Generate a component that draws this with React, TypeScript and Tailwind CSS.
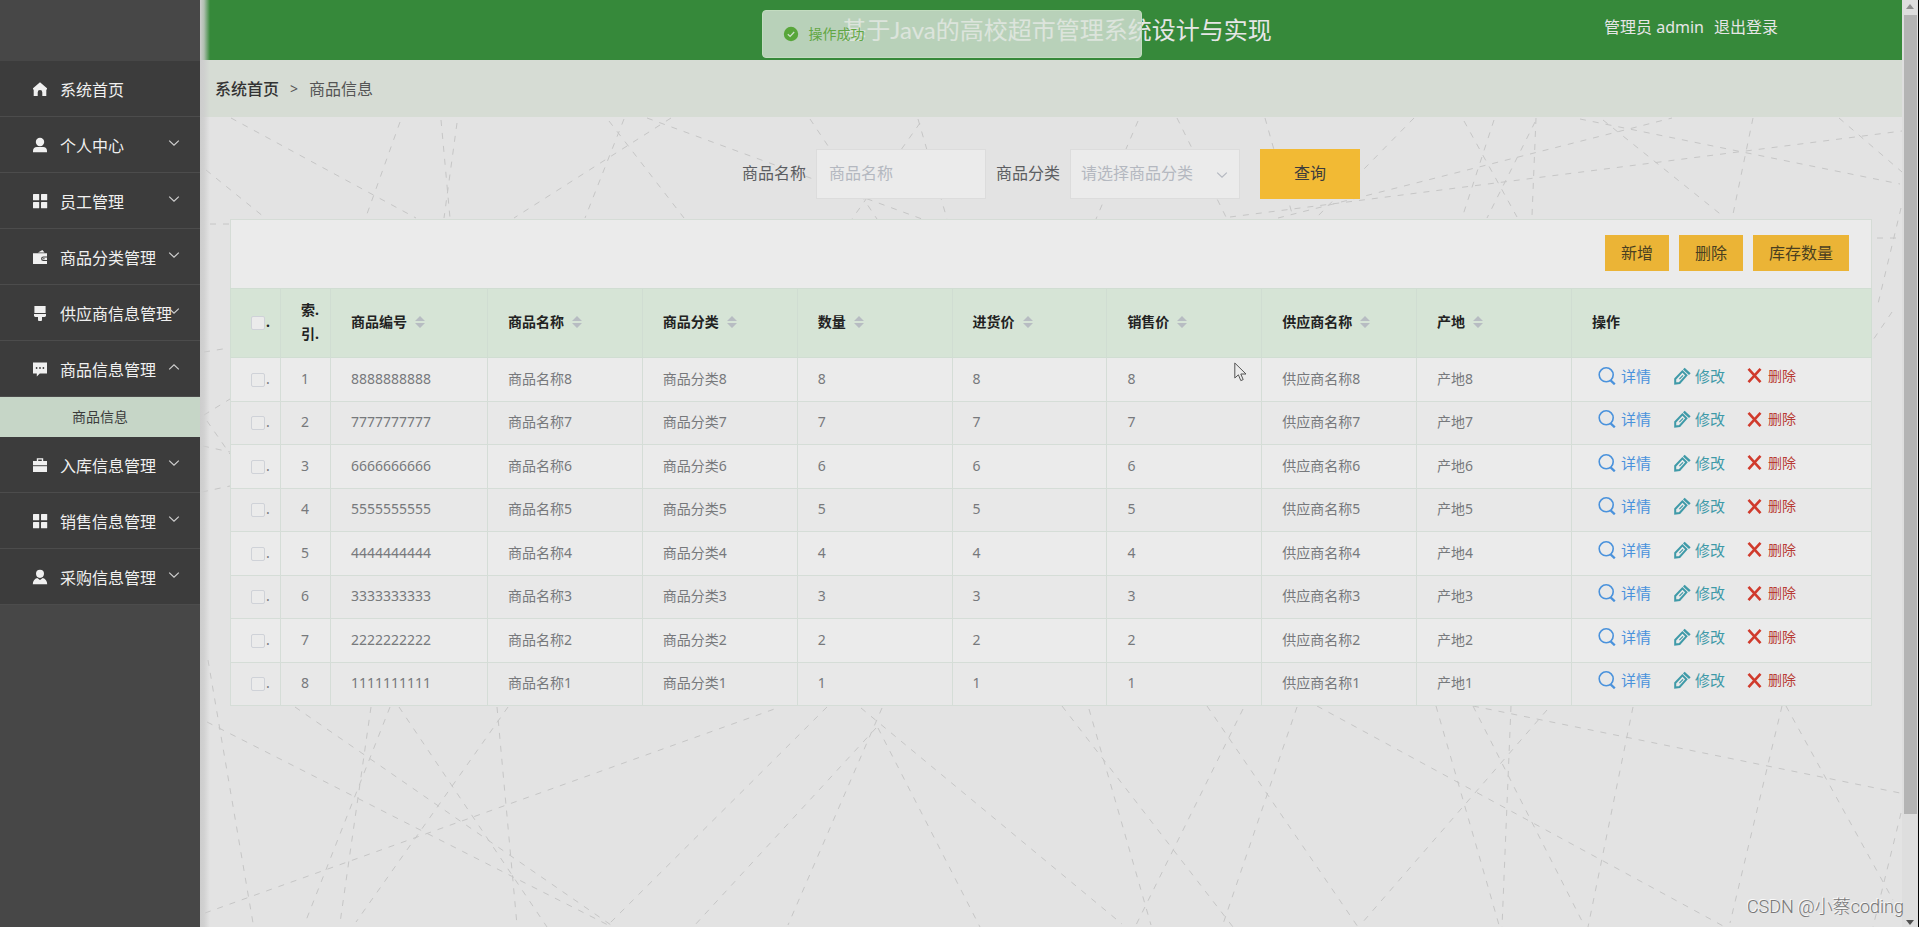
import React from 'react';

type IconProps = { className?: string };

const HomeIcon: React.FC<IconProps> = ({ className }) => (
    <svg viewBox="0 0 16 16" className={className} fill="currentColor" aria-hidden="true">
        <path d="M8 1.2 15 7.2V8.6H14.3V15H10.3V11.4A2.3 2.3 0 0 0 5.7 11.4V15H1.7V8.6H1V7.2Z" />
    </svg>
);

const UserIcon: React.FC<IconProps> = ({ className }) => (
    <svg viewBox="0 0 16 16" className={className} fill="currentColor" aria-hidden="true">
        <circle cx="8" cy="5" r="4.2" />
        <path d="M1 15.2V13.6C1 11.4 2.6 9.9 4.8 9.9H11.2C13.4 9.9 15 11.4 15 13.6V15.2Z" />
    </svg>
);

const GridIcon: React.FC<IconProps> = ({ className }) => (
    <svg viewBox="0 0 16 16" className={className} fill="currentColor" aria-hidden="true">
        <rect x="1" y="1" width="6.2" height="6.2" rx=".5" />
        <rect x="9" y="1" width="6.2" height="6.2" rx=".5" />
        <rect x="1" y="9" width="6.2" height="6.2" rx=".5" />
        <rect x="9" y="9" width="6.2" height="6.2" rx=".5" />
    </svg>
);

const WalletIcon: React.FC<IconProps> = ({ className }) => (
    <svg viewBox="0 0 16 16" className={className} fill="currentColor" aria-hidden="true">
        <path d="M6 3.6 10.4 1 12.6 3.6Z" />
        <path d="M1 4.2H15V7.4H11.4A2.2 2.2 0 0 0 11.4 12H15V15H1Z" />
        <path d="M11.6 8.4H15V11H11.6A1.3 1.3 0 0 1 11.6 8.4Z" />
        <circle cx="11.9" cy="9.7" r=".7" fill="#3c3c3c" />
    </svg>
);

const BrushIcon: React.FC<IconProps> = ({ className }) => (
    <svg viewBox="0 0 16 16" className={className} fill="currentColor" aria-hidden="true">
        <path d="M2.4 1H13.6V8H2.4Z" />
        <path d="M2 9H14V10.6C14 11.4 13.4 12 12.6 12H10V14.4A2 2 0 0 1 6 14.4V12H3.4C2.6 12 2 11.4 2 10.6Z" />
    </svg>
);

const CommentIcon: React.FC<IconProps> = ({ className }) => (
    <svg viewBox="0 0 16 16" className={className} fill="currentColor" aria-hidden="true">
        <path d="M1 1.4H15V12.4H7.8L4.8 15.4V12.4H1Z" />
        <circle cx="4.6" cy="7" r=".9" fill="#3c3c3c" />
        <circle cx="8" cy="7" r=".9" fill="#3c3c3c" />
        <circle cx="11.4" cy="7" r=".9" fill="#3c3c3c" />
    </svg>
);

const CaseIcon: React.FC<IconProps> = ({ className }) => (
    <svg viewBox="0 0 16 16" className={className} fill="currentColor" aria-hidden="true">
        <path fillRule="evenodd" d="M4.8 4V1.2H11.2V4H15V8.2H1V4ZM6.2 4H9.8V2.5H6.2Z" />
        <path d="M1 9.2H15V15H1Z" />
    </svg>
);

const CustomIcon: React.FC<IconProps> = ({ className }) => (
    <svg viewBox="0 0 16 16" className={className} fill="currentColor" aria-hidden="true">
        <path d="M8 .8A4 4 0 0 1 12 4.8C12 7 10.6 9 8 9S4 7 4 4.8A4 4 0 0 1 8 .8Z" />
        <path d="M5.2 9 8 11 10.8 9C13.4 9.8 15.2 12 15.2 15.2H.8C.8 12 2.6 9.8 5.2 9Z" />
    </svg>
);

const Chevron: React.FC<IconProps> = ({ className }) => (
    <svg viewBox="0 0 12 12" className={className} fill="none" stroke="currentColor" strokeWidth="1.2" aria-hidden="true">
        <path d="M1.2 3.6 6 8.2 10.8 3.6" />
    </svg>
);

const SearchIcon: React.FC<IconProps> = ({ className }) => (
    <svg viewBox="0 0 18 18" className={className} fill="none" stroke="currentColor" aria-hidden="true">
        <circle cx="8.2" cy="7.8" r="7" strokeWidth="1.6" />
        <path d="M12.6 13.4 16.8 17.4" strokeWidth="2.2" />
    </svg>
);

const EditIcon: React.FC<IconProps> = ({ className }) => (
    <svg viewBox="0 0 18 18" className={className} fill="none" stroke="currentColor" strokeWidth="2" aria-hidden="true">
        <path d="M2.2 16.6V12L9.4 4.4 13.4 8.4 6.6 16Z" />
        <path d="M10.8 1.6 16.8 7.2" strokeWidth="2.4" />
        <path d="M6.4 12.2 10 8.4" strokeWidth="1.2" />
    </svg>
);

const CrossIcon: React.FC<IconProps> = ({ className }) => (
    <svg viewBox="0 0 16 16" className={className} fill="none" stroke="currentColor" strokeWidth="2.8" aria-hidden="true">
        <path d="M1.6 1 14.4 15M14.4 1 1.6 15" />
    </svg>
);

const SortIcon: React.FC = () => (
    <svg viewBox="0 0 10 12" className="h-3 w-2.5 shrink-0" fill="#b7bcc2" aria-hidden="true">
        <path d="M5 0 10 5H0ZM5 12 0 7H10Z" />
    </svg>
);

const menus = [
    { name: '系统首页', Icon: HomeIcon, children: [], leaf: true },
    { name: '个人中心', Icon: UserIcon, children: [] },
    { name: '员工管理', Icon: GridIcon, children: [] },
    { name: '商品分类管理', Icon: WalletIcon, children: [] },
    { name: '供应商信息管理', Icon: BrushIcon, children: [] },
    { name: '商品信息管理', Icon: CommentIcon, children: ['商品信息'] },
    { name: '入库信息管理', Icon: CaseIcon, children: [] },
    { name: '销售信息管理', Icon: GridIcon, children: [] },
    { name: '采购信息管理', Icon: CustomIcon, children: [] },
];

const columns = ['商品编号', '商品名称', '商品分类', '数量', '进货价', '销售价', '供应商名称', '产地'];

const goods = [8, 7, 6, 5, 4, 3, 2, 1].map(n => ({
    id: n,
    cells: [String(n).repeat(10), `商品名称${n}`, `商品分类${n}`, `${n}`, `${n}`, `${n}`, `供应商名称${n}`, `产地${n}`],
}));

// x1, y1, x2, y2 of each dashed line in the page background
const lines = [
    [295, 707, 611, 925], [207, 722, 608, 925], [205, 913, 780, 707], [208, 660, 253, 923],
    [371, 707, 340, 923], [390, 707, 305, 923], [399, 707, 547, 927], [508, 707, 356, 922],
    [497, 707, 517, 925], [827, 707, 608, 925], [876, 728, 694, 926], [882, 708, 788, 925],
    [878, 728, 980, 927], [861, 708, 1122, 924], [1062, 706, 1233, 927], [1089, 709, 1151, 925],
    [1243, 709, 1135, 927], [1207, 706, 1358, 927], [1297, 707, 1222, 927], [1317, 706, 1725, 927],
    [1436, 706, 1499, 925], [1473, 706, 1583, 923], [1473, 706, 1900, 793], [1511, 706, 1502, 927],
    [1547, 710, 1362, 923], [1633, 707, 1588, 927], [1782, 706, 1730, 923], [1786, 706, 1893, 900],
    [1901, 813, 1873, 927], [231, 118, 416, 218], [206, 170, 264, 217], [400, 122, 367, 214],
    [441, 120, 450, 218], [457, 123, 444, 218], [609, 121, 684, 218], [624, 119, 585, 218],
    [671, 118, 514, 218], [647, 118, 922, 219], [810, 119, 877, 219], [920, 123, 852, 219],
    [918, 119, 947, 219], [1138, 121, 1096, 219], [1177, 118, 1226, 217], [1265, 118, 1293, 217],
    [1414, 118, 1317, 217], [1464, 121, 1517, 217], [1494, 120, 1462, 218], [1535, 122, 1487, 218],
    [1536, 118, 1532, 216], [1278, 218, 1672, 118], [1230, 217, 1902, 131], [1580, 119, 1900, 184],
    [1603, 120, 1724, 217], [1753, 118, 1732, 219], [1839, 118, 1902, 172], [1901, 208, 1877, 308],
    [1892, 312, 1873, 340], [1877, 238, 1900, 238], [204, 352, 229, 348], [204, 415, 230, 399],
    [207, 421, 230, 454], [203, 446, 230, 452], [202, 492, 230, 486], [210, 224, 230, 224],
];

const Sidebar: React.FC = () => (
    <aside className="w-[200px] shrink-0 bg-[#474747] pt-[61px] text-[#f0f0f0]">
        <nav>
            {menus.map(({ name, Icon, children, leaf }) => (
                <div key={name}>
                    <button type="button" className="relative flex h-14 w-full items-center gap-3 border-b border-[#4c4c4c] bg-[#3c3c3c] pl-8 text-base whitespace-nowrap">
                        <Icon className="size-4 shrink-0" />
                        <span className="pt-0.5">{name}</span>
                        {!leaf && (
                            <Chevron className={`absolute top-5 right-5 size-3 text-[#d0d0d0] ${children.length > 0 ? 'rotate-180' : ''}`} />
                        )}
                    </button>
                    {children.map(child => (
                        <a key={child} href="#goods" className="flex h-10 items-center justify-center bg-[#c6d6c7] text-sm text-[#3c3c3c]">{child}</a>
                    ))}
                </div>
            ))}
        </nav>
    </aside>
);

const SearchForm: React.FC = () => (
    <form className="flex items-center justify-center py-8 text-base text-[#5c5e62]" onSubmit={e => e.preventDefault()}>
        <label htmlFor="goods-name" className="mr-2.5 pb-0.5">商品名称</label>
        <input id="goods-name" type="text" placeholder="商品名称" className="mr-2.5 h-[50px] w-[170px] border border-[#dcdcdc] bg-[#ebebeb] px-3 pb-0.5 placeholder:text-[#b4b8c0]" />
        <label htmlFor="goods-type" className="mr-2.5 pb-0.5">商品分类</label>
        <div className="relative mr-5">
            <select id="goods-type" className="h-[50px] w-[170px] appearance-none border border-[#dcdcdc] bg-[#ebebeb] px-2.5 pb-0.5 text-[#b4b8c0]">
                <option>请选择商品分类</option>
            </select>
            <Chevron className="pointer-events-none absolute top-5 right-3 size-3 text-[#b4b8c0]" />
        </div>
        <button type="submit" className="h-[50px] w-[100px] bg-[#f2ba34] pb-0.5 text-[#3c3c3c]">查询</button>
    </form>
);

const GoodsTable: React.FC = () => (
    <table className="w-full table-fixed border-collapse text-left text-sm text-[#77797c]">
        <colgroup>
            <col className="w-[50px]" />
            <col className="w-[50px]" />
            {columns.map((c, i) => <col key={c} className={i === 0 ? 'w-[157px]' : ''} />)}
            <col className="w-[300px]" />
        </colgroup>
        <thead>
            <tr className="h-[69px] bg-[#d6e4d6] text-[#222] [&>th]:border [&>th]:border-[#d0ddd2] [&>th]:pb-0.5 [&>th]:font-bold">
                <th className="pl-5">
                    <div className="flex items-end gap-px">
                        <input type="checkbox" aria-label="全选" className="size-3.5 shrink-0 appearance-none rounded-xs border border-[#cfd2d8] bg-[#ebebeb]" />
                        <span className="leading-4">.</span>
                    </div>
                </th>
                <th className="pl-5 leading-6">索.<br />引.</th>
                {columns.map(c => (
                    <th key={c} className="pl-5">
                        <button type="button" className="flex items-center gap-2 font-bold whitespace-nowrap">{c}<SortIcon /></button>
                    </th>
                ))}
                <th className="pl-5">操作</th>
            </tr>
        </thead>
        <tbody>
            {goods.map((row, i) => (
                <tr key={row.id} className="odd:h-11 even:h-[43px] odd:bg-[#ebebeb] even:bg-[#e8e8e8] [&>td]:border [&>td]:border-[#d5ddd7]">
                    <td className="pb-0.5 pl-5">
                        <div className="flex items-end gap-px">
                            <input type="checkbox" aria-label={`选择 ${row.cells[1]}`} className="size-3.5 shrink-0 appearance-none rounded-xs border border-[#cfd2d8] bg-[#ebebeb]" />
                            <span className="leading-4">.</span>
                        </div>
                    </td>
                    <td className="pb-0.5 pl-5">{i + 1}</td>
                    {row.cells.map((cell, j) => <td key={j} className="pb-0.5 pl-5">{cell}</td>)}
                    <td className="pb-2 pl-[26px]">
                        <div className="flex items-center">
                            <button type="button" className="mr-[22px] flex items-center gap-[5px] text-[15px] leading-5 text-[#4a92dc]"><SearchIcon className="size-[18px]" />详情</button>
                            <button type="button" className="mr-[22px] flex items-center gap-1 text-[15px] leading-5 text-[#3f9aa8]"><EditIcon className="size-[18px]" />修改</button>
                            <button type="button" className="flex items-center gap-1.5 text-sm text-[#b83a34]"><CrossIcon className="size-[15px] text-[#d03a2c]" />删除</button>
                        </div>
                    </td>
                </tr>
            ))}
        </tbody>
    </table>
);

const Toast: React.FC = () => (
    <div role="status" className="absolute top-2.5 left-[calc(50%-8px)] flex h-12 w-[380px] -translate-x-1/2 items-center gap-2.5 rounded border border-[#c3dcc0] bg-[#dae3d9]/80 pl-5 text-sm text-[#62a744]">
        <svg viewBox="0 0 16 16" className="size-4" aria-hidden="true">
            <circle cx="8" cy="8" r="7.2" fill="#58a63a" />
            <path d="M4.8 8.2 7.1 10.4 11.2 6" fill="none" stroke="#cfe0cc" strokeWidth="1.3" />
        </svg>
        操作成功
    </div>
);

const Scrollbar: React.FC = () => (
    <div className="flex w-[17px] shrink-0 flex-col items-center justify-between border-r border-black bg-[#dedede] py-0.5" aria-hidden="true">
        <svg viewBox="0 0 8 5" className="mt-0.5 h-[5px] w-2" fill="#8f8f8f"><path d="M4 0 8 5H0Z" /></svg>
        <div className="mt-1.5 mb-auto h-[799px] w-[13px] bg-[#b4b4b4]" />
        <svg viewBox="0 0 8 5" className="h-[5px] w-2" fill="#505050"><path d="M0 0H8L4 5Z" /></svg>
    </div>
);

const App: React.FC = () => (
    <div className="relative flex min-h-screen bg-[#e3e3e3] font-['Noto_Sans','Noto_Sans_CJK_SC',sans-serif]">
        <Sidebar />
        <div className="relative flex min-w-0 flex-1 flex-col">
            <header className="relative flex h-[60px] items-center bg-[#36893a] text-[#e6e6e6]">
                <h1 className="w-full pl-3 text-center font-['Lato','Noto_Sans_CJK_SC',sans-serif] text-2xl">基于Java的高校超市管理系统设计与实现</h1>
                <div className="absolute top-[15px] right-[124px] flex gap-2.5 text-base leading-6">
                    <span>管理员 admin</span>
                    <a href="#logout">退出登录</a>
                </div>
            </header>
            <nav className="flex h-[57px] items-center bg-[#d6dcd4] pl-[15px] text-base text-[#555]">
                <a href="#home" className="font-medium text-[#333]">系统首页</a>
                <span className="mx-[11px] text-sm">&gt;</span>
                <span>商品信息</span>
            </nav>
            <main className="relative flex-1 px-[30px]">
                <svg viewBox="200 117 1702 810" preserveAspectRatio="xMinYMin slice" className="absolute inset-0 size-full" stroke="#c6c6c6" strokeDasharray="6 7" aria-hidden="true">
                    {lines.map(([x1, y1, x2, y2], i) => <line key={i} x1={x1} y1={y1} x2={x2} y2={y2} />)}
                </svg>
                <div className="relative">
                    <SearchForm />
                    <div className="-mt-3">
                        <div className="flex h-[69px] items-center justify-end gap-2.5 border border-b-0 border-[#d5dcd6] bg-[#ebebeb] pr-[22px] pb-0.5 text-base text-[#4a3f20]">
                            <button type="button" className="h-9 bg-[#ebb436] px-4">新增</button>
                            <button type="button" className="h-9 bg-[#ebb436] px-4">删除</button>
                            <button type="button" className="h-9 bg-[#ebb436] px-4">库存数量</button>
                        </div>
                        <GoodsTable />
                    </div>
                </div>
            </main>
            <div className="pointer-events-none absolute inset-y-0 left-0 w-2.5 bg-linear-to-r from-[#cdcdcd] via-[#cdcdcd]/80 via-40% to-transparent" />
        </div>
        <Scrollbar />
        <Toast />
        <svg viewBox="0 0 13 20" className="pointer-events-none absolute top-[362px] left-[1234px] h-5 w-[13px]" fill="#ececec" stroke="#555" aria-hidden="true">
            <path d="M.8 1V16L4.4 12.8 6.8 18.6 9.2 17.6 6.8 12H12Z" />
        </svg>
        <p className="pointer-events-none absolute right-[15px] bottom-2 font-['Roboto','Noto_Sans_CJK_SC',sans-serif] text-lg leading-6 font-light text-[#777] [text-shadow:-1px_-1px_0_#fafafa]">CSDN @小蔡coding</p>
    </div>
);

export default App;
